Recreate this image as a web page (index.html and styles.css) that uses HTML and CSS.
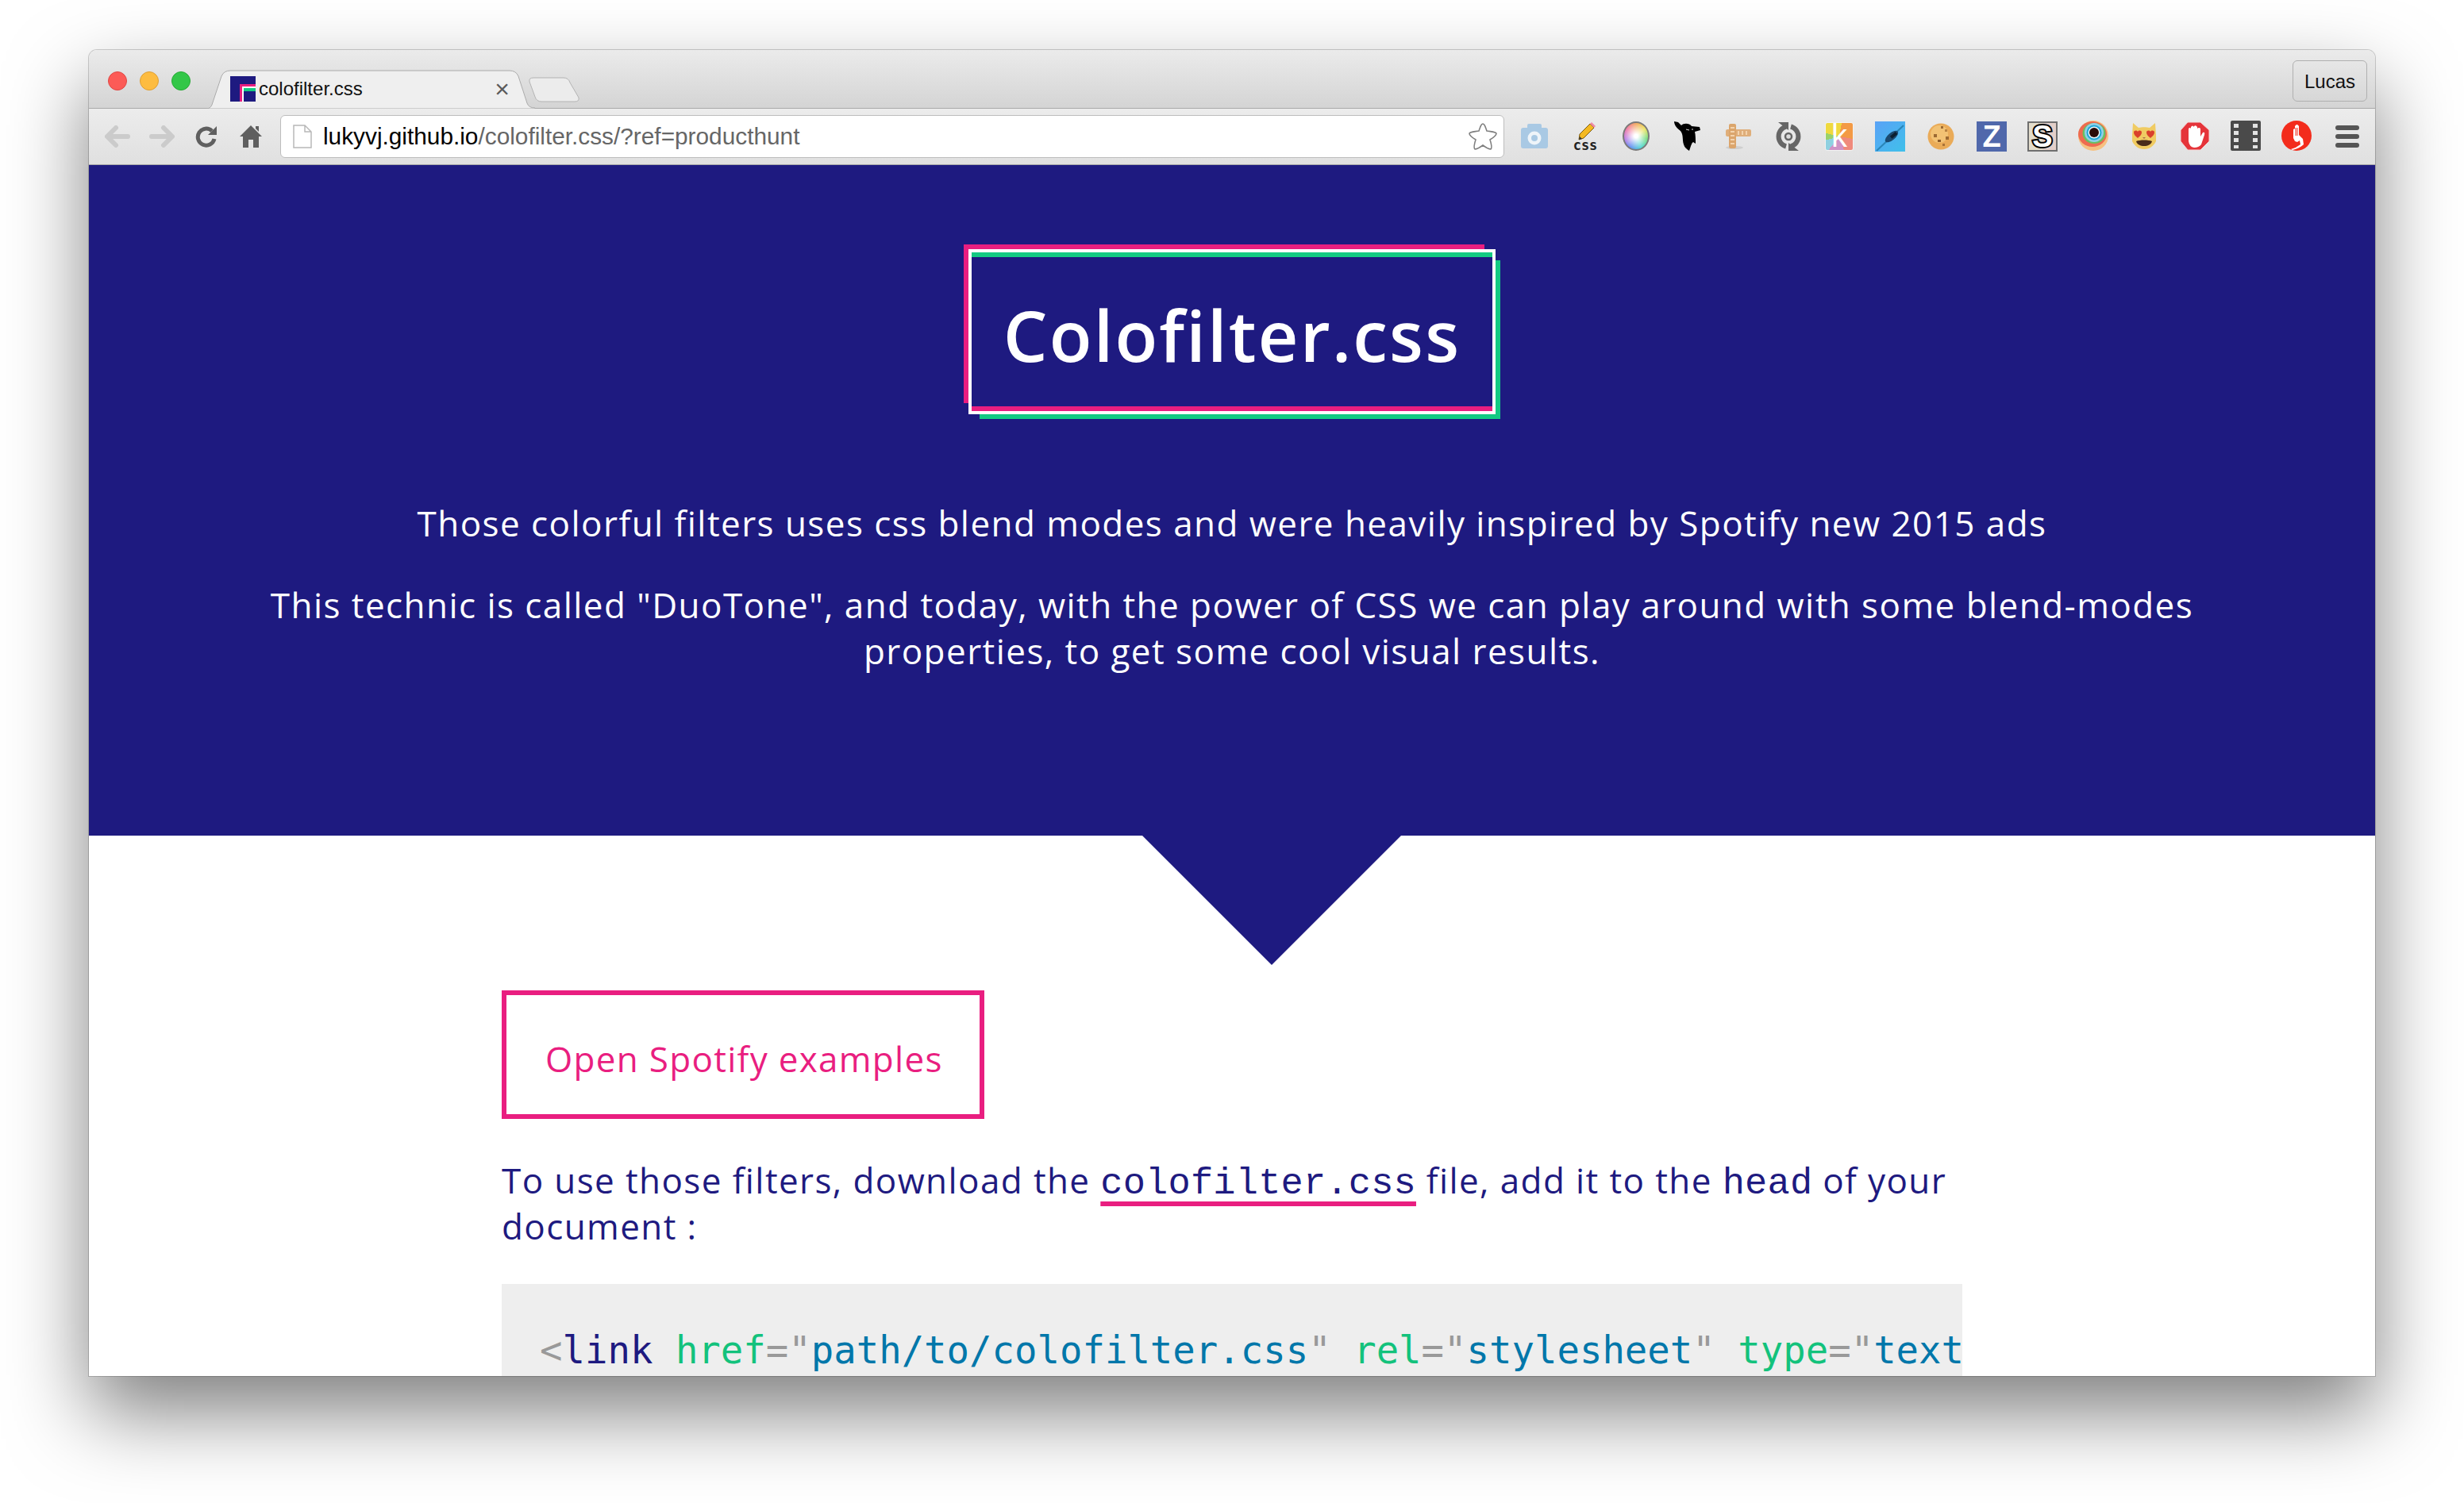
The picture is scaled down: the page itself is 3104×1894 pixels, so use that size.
FILE: index.html
```html
<!DOCTYPE html>
<html>
<head>
    <title>colofilter.css</title>
    <link rel="stylesheet" href="styles.css">
</head>
<body>
    <div class="window">
        <div class="titlebar">
            <span class="light red"></span>
            <span class="light yellow"></span>
            <span class="light green"></span>
            <div class="tab">
                <svg class="tab-shape" width="418" height="49" viewBox="0 0 418 49">
                    <path d="M0 49 H4 Q9 49 11 44 L23 8 Q26 1 34 1 H386 Q394 1 397 8 L408 42 Q410 48 418 48 V49 Z" fill="#efefef" stroke="#ababab"/>
                </svg>
                <svg class="favicon" width="32" height="32" viewBox="0 0 32 32">
                    <rect width="32" height="32" fill="#1e1a80"/>
                    <rect x="12" y="10" width="20" height="3" fill="#e91e80"/>
                    <rect x="12" y="10" width="3" height="22" fill="#e91e80"/>
                    <rect x="15" y="13" width="17" height="2" fill="#fff"/>
                    <rect x="15" y="13" width="2" height="19" fill="#fff"/>
                    <rect x="17" y="15" width="15" height="4" fill="#13ca83"/>
                </svg>
                <span class="tab-title">colofilter.css</span>
                <span class="tab-close">×</span>
            </div>
            <svg class="newtab" width="64" height="32" viewBox="0 0 64 32">
                <path d="M1 6 Q0 1 6 1 H44 Q50 1 52 7 L63 26 Q64 31 58 31 H16 Q10 31 8 25 Z" fill="#ececec" stroke="#b3b3b3"/>
            </svg>
            <div class="profile">Lucas</div>
        </div>

        <div class="toolbar">
            <span class="nav">
                <svg width="32" height="28" viewBox="0 0 32 28"><path d="M14 3 L3 14 L14 25 M4 14 H29" fill="none" stroke="#cbcbcb" stroke-width="6" stroke-linecap="round" stroke-linejoin="round"/></svg>
            </span>
            <span class="nav">
                <svg width="32" height="28" viewBox="0 0 32 28"><path d="M18 3 L29 14 L18 25 M28 14 H3" fill="none" stroke="#cbcbcb" stroke-width="6" stroke-linecap="round" stroke-linejoin="round"/></svg>
            </span>
            <span class="nav">
                <svg width="28" height="28" viewBox="0 0 28 28"><path d="M21 7 A10.500 10.500 0 1 0 24 17" fill="none" stroke="#5f5f5f" stroke-width="5"/><path d="M27 1 V12 H16 Z" fill="#5f5f5f"/></svg>
            </span>
            <span class="nav">
                <svg width="28" height="28" viewBox="0 0 28 28"><path d="M14 0 L28 14 H24 V28 H17 V18 H11 V28 H4 V14 H0 Z M20 1 H24 V8 L20 4 Z" fill="#5f5f5f"/></svg>
            </span>
            <div class="omnibox">
                <svg width="24" height="30" viewBox="0 0 24 30"><path d="M1 1 H15 L23 9 V29 H1 Z M15 1 V9 H23" fill="#fff" stroke="#b8b8b8" stroke-width="1.500"/></svg>
                <span class="url"><span class="url-host">lukyvj.github.io</span>/colofilter.css/?ref=producthunt</span>
                <svg class="star" width="36" height="36" viewBox="0 0 36 36"><path d="M18 2 C20 2 21 5 23 11 C29 12 34 12 35 14 C35 16 32 19 27 22 C29 28 30 32 28 34 C26 34 22 32 18 29 C14 32 10 34 8 34 C6 32 7 28 9 22 C4 19 1 16 1 14 C2 12 7 12 13 11 C15 5 16 2 18 2 Z" fill="#fff" stroke="#7f7f7f" stroke-width="1.600"/></svg>
            </div>
            <div class="extensions">
                <span class="ext"><svg width="40" height="40" viewBox="0 0 40 40"><rect x="11" y="4" width="18" height="10" rx="2" fill="#a9c9e4"/><rect x="3" y="9" width="34" height="26" rx="3" fill="#a9c9e4"/><circle cx="20" cy="22" r="8.500" fill="#eef4f9"/><circle cx="20" cy="22" r="4" fill="#a9c9e4"/></svg></span>
                <span class="ext"><svg width="40" height="40" viewBox="0 0 40 40"><path d="M12 24 L13 17 L26 4 L31 9 L18 22 Z" fill="#f4b921" stroke="#7a5a10"/><path d="M26 4 L28 2 L33 7 L31 9 Z" fill="#ef8aa4"/><path d="M12 24 L13 20 L16 23 Z" fill="#333"/><text class="ext-css" x="20" y="37" text-anchor="middle">css</text></svg></span>
                <span class="ext"><span class="wheel"></span></span>
                <span class="ext"><svg width="40" height="40" viewBox="0 0 40 40"><path d="M4 1 L9 2 L13 6 C16 3 23 3 26 7 L36 8 L37 12 L30 14 C31 18 31 24 31 29 L28 27 C26 28 26 30 25 32 L23 38 C20 36 17 34 16 30 C14 24 16 18 12 13 C8 10 4 6 4 1 Z" fill="#000"/><path d="M19 11 L23 12 M26 11 L28 11" stroke="#d8d8d8" stroke-width="1"/></svg></span>
                <span class="ext"><svg width="40" height="40" viewBox="0 0 40 40"><ellipse cx="16" cy="34" rx="11" ry="2" fill="#cfcfcf"/><rect x="5" y="11" width="32" height="9" rx="2" fill="#dfae7a"/><rect x="9" y="4" width="9" height="31" rx="2" fill="#dba56c"/><path d="M11 9 H16 M11 14 H16 M11 19 H16 M11 24 H16 M11 29 H16 M21 13 V18 M26 13 V18 M31 13 V18" stroke="#f3d3ad" stroke-width="2"/></svg></span>
                <span class="ext"><svg width="40" height="40" viewBox="0 0 40 40"><path d="M17 7.500 A13 13 0 0 0 17 32.500 M23 32.500 A13 13 0 0 0 23 7.500" fill="none" stroke="#666" stroke-width="6"/><path d="M7 2 H20 V12 Z M33 38 H20 V28 Z" fill="#666"/><circle cx="20" cy="20" r="4" fill="#dcdcdc" stroke="#666" stroke-width="2.500"/></svg></span>
                <span class="ext"><span class="kbadge">k</span></span>
                <span class="ext"><svg width="38" height="38" viewBox="0 0 38 38"><defs><linearGradient id="tileBlue" x1="0" y1="0" x2="1" y2="1"><stop offset="0" stop-color="#5aa2f6"/><stop offset="1" stop-color="#3fc0ea"/></linearGradient></defs><rect width="38" height="38" fill="url(#tileBlue)"/><path d="M2 37 L36 5" stroke="#2a86b8" stroke-width="2"/><ellipse cx="21" cy="19" rx="10" ry="4.500" transform="rotate(-40 21 19)" fill="#1b4a70"/><rect x="22" y="13" width="4" height="9" transform="rotate(50 24 17)" fill="#0c1f30"/></svg></span>
                <span class="ext"><svg width="40" height="40" viewBox="0 0 40 40"><circle cx="20" cy="20" r="16.500" fill="#eaab58"/><circle cx="18" cy="17" r="11" fill="#f2c274"/><rect x="11" y="17" width="4" height="4" fill="#9c6a33"/><rect x="20" y="7" width="3" height="3" fill="#9c6a33"/><rect x="16" y="24" width="4" height="3" fill="#8c5a2a"/><rect x="26" y="20" width="4" height="4" fill="#9c6a33"/><rect x="22" y="29" width="3" height="3" fill="#a87238"/><rect x="25" y="11" width="3" height="3" fill="#b98444"/></svg></span>
                <span class="ext"><span class="ztile">Z</span></span>
                <span class="ext"><span class="stile">S</span></span>
                <span class="ext"><svg width="40" height="40" viewBox="0 0 40 40"><ellipse cx="20" cy="19" rx="19" ry="19" fill="#f6c181"/><ellipse cx="19" cy="17" rx="18" ry="16" fill="#ee6b50"/><ellipse cx="21" cy="16" rx="14.500" ry="13" fill="#6bbf62"/><ellipse cx="21" cy="15" rx="12" ry="12" fill="#8fd0e8"/><circle cx="21" cy="15" r="9.500" fill="#21a8d6"/><circle cx="21" cy="15" r="7.500" fill="#eaf6fa"/><circle cx="21" cy="15" r="6" fill="#2a0c08"/></svg></span>
                <span class="ext"><svg width="40" height="40" viewBox="0 0 40 40"><path d="M6 3 L13 9 C17 8 23 8 27 9 L34 3 L35 18 L35 26 C32 32 27 36 20 36 C13 36 8 32 5 26 L5 18 Z" fill="#f0cb62"/><path d="M7 15 C7 12 11 12 12 14 C13 12 17 12 17 15 C17 18 14 20 12 22 C10 20 7 18 7 15 Z M23 15 C23 12 27 12 28 14 C29 12 33 12 33 15 C33 18 30 20 28 22 C26 20 23 18 23 15 Z" fill="#d9402c"/><path d="M10 26 C15 24 25 24 30 26 C28 34 12 34 10 26 Z" fill="#4a2c1a"/><path d="M18 21 H22 L20 23 Z" fill="#a86a4a"/></svg></span>
                <span class="ext"><svg width="40" height="40" viewBox="0 0 40 40"><path d="M11 2 H27 L38 12 V26 L27 37 H11 L2 26 V12 Z" fill="#e5343a" stroke="#f3d8d8" stroke-width="1"/><path d="M12 20 V10 Q14 8 15 10 V8 Q17 5 19 8 V7 Q21 5 23 8 V10 Q25 8 27 10 V20 L30 15 Q33 14 32 18 L28 30 Q25 34 19 34 Q13 33 12 26 Z" fill="#fff"/></svg></span>
                <span class="ext"><svg width="40" height="40" viewBox="0 0 40 40"><rect x="1" y="0" width="38" height="38" rx="2" fill="#4a4a4a"/><path d="M5 4 H11 V9 H5 Z M29 4 H35 V9 H29 Z M5 13 H11 V18 H5 Z M29 13 H35 V18 H29 Z M5 22 H11 V27 H5 Z M29 22 H35 V27 H29 Z M5 31 H11 V35 H5 Z M29 31 H35 V35 H29 Z" fill="#e2e2e2"/></svg></span>
                <span class="ext"><svg width="40" height="40" viewBox="0 0 40 40"><circle cx="20" cy="19" r="19" fill="#f32c1c"/><path d="M16 22 V11 L18 10 V7 Q20.500 3 23 7 V18 L28 23 L29 30 Q24 35 15 37 L13 36 Q20 34 25 30 L24 25 L21 27 L18 26 Z" fill="#fff"/><path d="M19 9 V19 M21 9 V19" stroke="#f32c1c" stroke-width="1"/></svg></span>
                <span class="ext"><span class="menu-bars"><i></i><i></i><i></i></span></span>
            </div>
        </div>

        <header class="hero">
            <h1 class="logo">Colofilter.css</h1>
            <p class="intro">Those colorful filters uses css blend modes and were heavily inspired by Spotify new 2015 ads</p>
            <p class="intro intro-next">This technic is called "DuoTone", and today, with the power of CSS we can play around with some blend-modes properties, to get some cool visual results.</p>
        </header>

        <main class="content">
            <a class="btn-open">Open Spotify examples</a>
            <p class="usage">To use those filters, download the <a class="file-link">colofilter.css</a> file, add it to the <code>head</code> of your document :</p>
            <pre class="snippet"><span class="punct">&lt;</span><span class="tag">link</span> <span class="attr">href</span><span class="punct">="</span><span class="val">path/to/colofilter.css</span><span class="punct">"</span> <span class="attr">rel</span><span class="punct">="</span><span class="val">stylesheet</span><span class="punct">"</span> <span class="attr">type</span><span class="punct">="</span><span class="val">text/css</span><span class="punct">"</span> <span class="punct">/&gt;</span></pre>
        </main>
    </div>
</body>
</html>
```

FILE: styles.css
```css
html, body {
    margin: 0;
    height: 1894px;
    overflow: hidden;
    background: #fff;
}

body {
    padding: 63px 112px 0;
    box-sizing: border-box;
    font-family: "Open Sans", sans-serif;
}

.window {
    height: 1671px;
    border-radius: 10px 10px 0 0;
    overflow: hidden;
    background: #fff;
    box-shadow: 0 46px 100px rgba(0,0,0,0.5), 0 0 0 1px rgba(0,0,0,0.18);
}

/* browser chrome */
.titlebar {
    display: flex;
    height: 74px;
    box-sizing: border-box;
    padding-left: 24px;
    border-bottom: 1px solid #a9a9a9;
    background: linear-gradient(#ebebeb, #d4d4d4);
}

.light {
    width: 22px;
    height: 22px;
    margin: 27px 16px 0 0;
    border-radius: 50%;
    border: 1px solid;
}

.red { background: #fc5b57; border-color: #df4744; }
.yellow { background: #fdbc40; border-color: #de9f34; }
.green { background: #33c748; border-color: #27aa35; }

.tab {
    position: relative;
    display: flex;
    align-items: flex-start;
    box-sizing: border-box;
    width: 418px;
    height: 49px;
    margin-top: 25px;
    padding: 8px 34px 0;
}

.tab-shape {
    position: absolute;
    left: 0;
    top: 0;
}

.favicon {
    position: relative;
    flex: none;
}

.tab-title {
    position: relative;
    margin-left: 4px;
    font: 24px/32px "Liberation Sans", sans-serif;
    color: #111;
}

.tab-close {
    position: relative;
    margin-left: auto;
    margin-right: -2px;
    font: 32px/32px "Liberation Sans", sans-serif;
    color: #5a5a5a;
}

.newtab {
    margin: 34px 0 0 -8px;
}

.profile {
    width: 94px;
    height: 52px;
    box-sizing: border-box;
    margin: 13px 10px 0 auto;
    border: 1px solid #b0b0b0;
    border-radius: 6px;
    text-align: center;
    font: 24px/52px "Liberation Sans", sans-serif;
    color: #111;
}

.toolbar {
    display: flex;
    align-items: center;
    height: 71px;
    box-sizing: border-box;
    padding: 0 3px 1px 8px;
    border-bottom: 1px solid #a8a8a8;
    background: linear-gradient(#ececec, #e0e0e0);
}

.nav {
    display: flex;
    justify-content: center;
    width: 56px;
}

.omnibox {
    display: flex;
    align-items: center;
    flex: 1;
    height: 54px;
    box-sizing: border-box;
    margin-left: 9px;
    padding: 0 8px 0 15px;
    background: #fff;
    border: 1px solid #bdbdbd;
    border-radius: 6px;
}

.url {
    margin-left: 14px;
    font: 29.800px "Liberation Sans", sans-serif;
    color: #666;
}

.url-host {
    color: #000;
}

.star {
    margin-left: auto;
}

.extensions {
    display: flex;
    margin-left: 6px;
}

.ext {
    display: flex;
    align-items: center;
    justify-content: center;
    width: 64px;
    height: 40px;
}

.ext-css {
    font: bold 17px "DejaVu Sans Mono", monospace;
    fill: #222;
}

.wheel {
    width: 30px;
    height: 33px;
    border: 2px solid #7a7a7a;
    border-radius: 50%;
    background: radial-gradient(circle, #fff 10%, rgba(255,255,255,0) 75%),
        conic-gradient(#f2a65a, #e8e04e, #62d66a, #4ed6d0, #5a8cf0, #b36ae0, #f06a9a, #f2a65a);
}

.kbadge {
    width: 36px;
    height: 36px;
    border: 1px solid #f2f2f2;
    box-sizing: border-box;
    border-radius: 3px;
    text-align: center;
    font: 40px/32px "Liberation Sans", sans-serif;
    color: #fff;
    background: conic-gradient(from 10deg, #f39a45 0 25%, #ef8a7c 25% 42%, #cf93c6 42% 58%, #8fd0e0 58% 68%, #9ad26a 68% 76%, #efd93e 76% 100%);
}

.ztile {
    width: 38px;
    height: 38px;
    text-align: center;
    font: bold 38px/38px "Liberation Sans", sans-serif;
    color: #fff;
    background: #5068ab;
}

.stile {
    width: 38px;
    height: 38px;
    box-sizing: border-box;
    border: 2px solid #6f6f6f;
    text-align: center;
    font: bold 38px/34px "Liberation Sans", sans-serif;
    color: #fff;
    -webkit-text-stroke: 4px #000;
    paint-order: stroke fill;
    background: linear-gradient(90deg, #e3ddcc 50%, #e3cfc9 50%);
}

.menu-bars {
    display: flex;
    flex-direction: column;
    gap: 5px;
    width: 30px;
}

.menu-bars i {
    height: 6px;
    border-radius: 3px;
    background: #555;
}

/* hero */
.hero {
    position: relative;
    height: 845px;
    box-sizing: border-box;
    padding-top: 106px;
    text-align: center;
    color: #fff;
    background: #1e1a80;
}

.hero::after {
    content: "";
    position: absolute;
    left: 1327px;
    top: 100%;
    width: 326px;
    height: 163px;
    background: #1e1a80;
    clip-path: polygon(0 0, 100% 0, 50% 100%);
}

.logo {
    display: block;
    width: 664px;
    height: 208px;
    box-sizing: border-box;
    margin: 0 auto;
    border: 4px solid #fff;
    font-size: 88px;
    font-weight: 600;
    letter-spacing: 2.200px;
    line-height: 208px;
    box-shadow: inset 0 6px 0 #13ca83, inset 0 -6px 0 #e91e80, -10px -10px 0 -4px #e91e80, 10px 10px 0 -4px #13ca83;
}

.intro {
    max-width: 2600px;
    margin: 108px auto 0;
    font-size: 44px;
    font-weight: 400;
    letter-spacing: 1.450px;
    line-height: 58px;
}

.intro-next {
    margin-top: 45px;
}

/* page content */
.content {
    width: 1840px;
    margin: 0 auto;
    padding-top: 195px;
    color: #1e1a80;
}

.btn-open {
    display: block;
    width: 608px;
    height: 162px;
    box-sizing: border-box;
    border: 6px solid #e91e80;
    padding-left: 49px;
    font-size: 44px;
    font-weight: 400;
    letter-spacing: 1.300px;
    line-height: 160px;
    color: #e91e80;
}

.usage {
    margin: 49px 0 44px;
    font-size: 44px;
    font-weight: 400;
    letter-spacing: 1.400px;
    line-height: 57.600px;
}

.usage code, .file-link {
    font-family: "Liberation Mono", monospace;
    font-size: 47px;
    font-weight: 400;
    letter-spacing: 0.200px;
    line-height: 1;
}

.file-link {
    text-decoration: underline #e91e80 6px;
    text-underline-offset: 10px;
    text-decoration-skip-ink: none;
}

.snippet {
    margin: 0;
    height: 200px;
    padding: 55px 0 0 48px;
    overflow: hidden;
    background: #eee;
    font: 47.300px/58px "DejaVu Sans Mono", monospace;
}

.punct { color: #999; }
.tag { color: #1e1a80; }
.attr { color: #13c27c; }
.val { color: #0077aa; }
```
